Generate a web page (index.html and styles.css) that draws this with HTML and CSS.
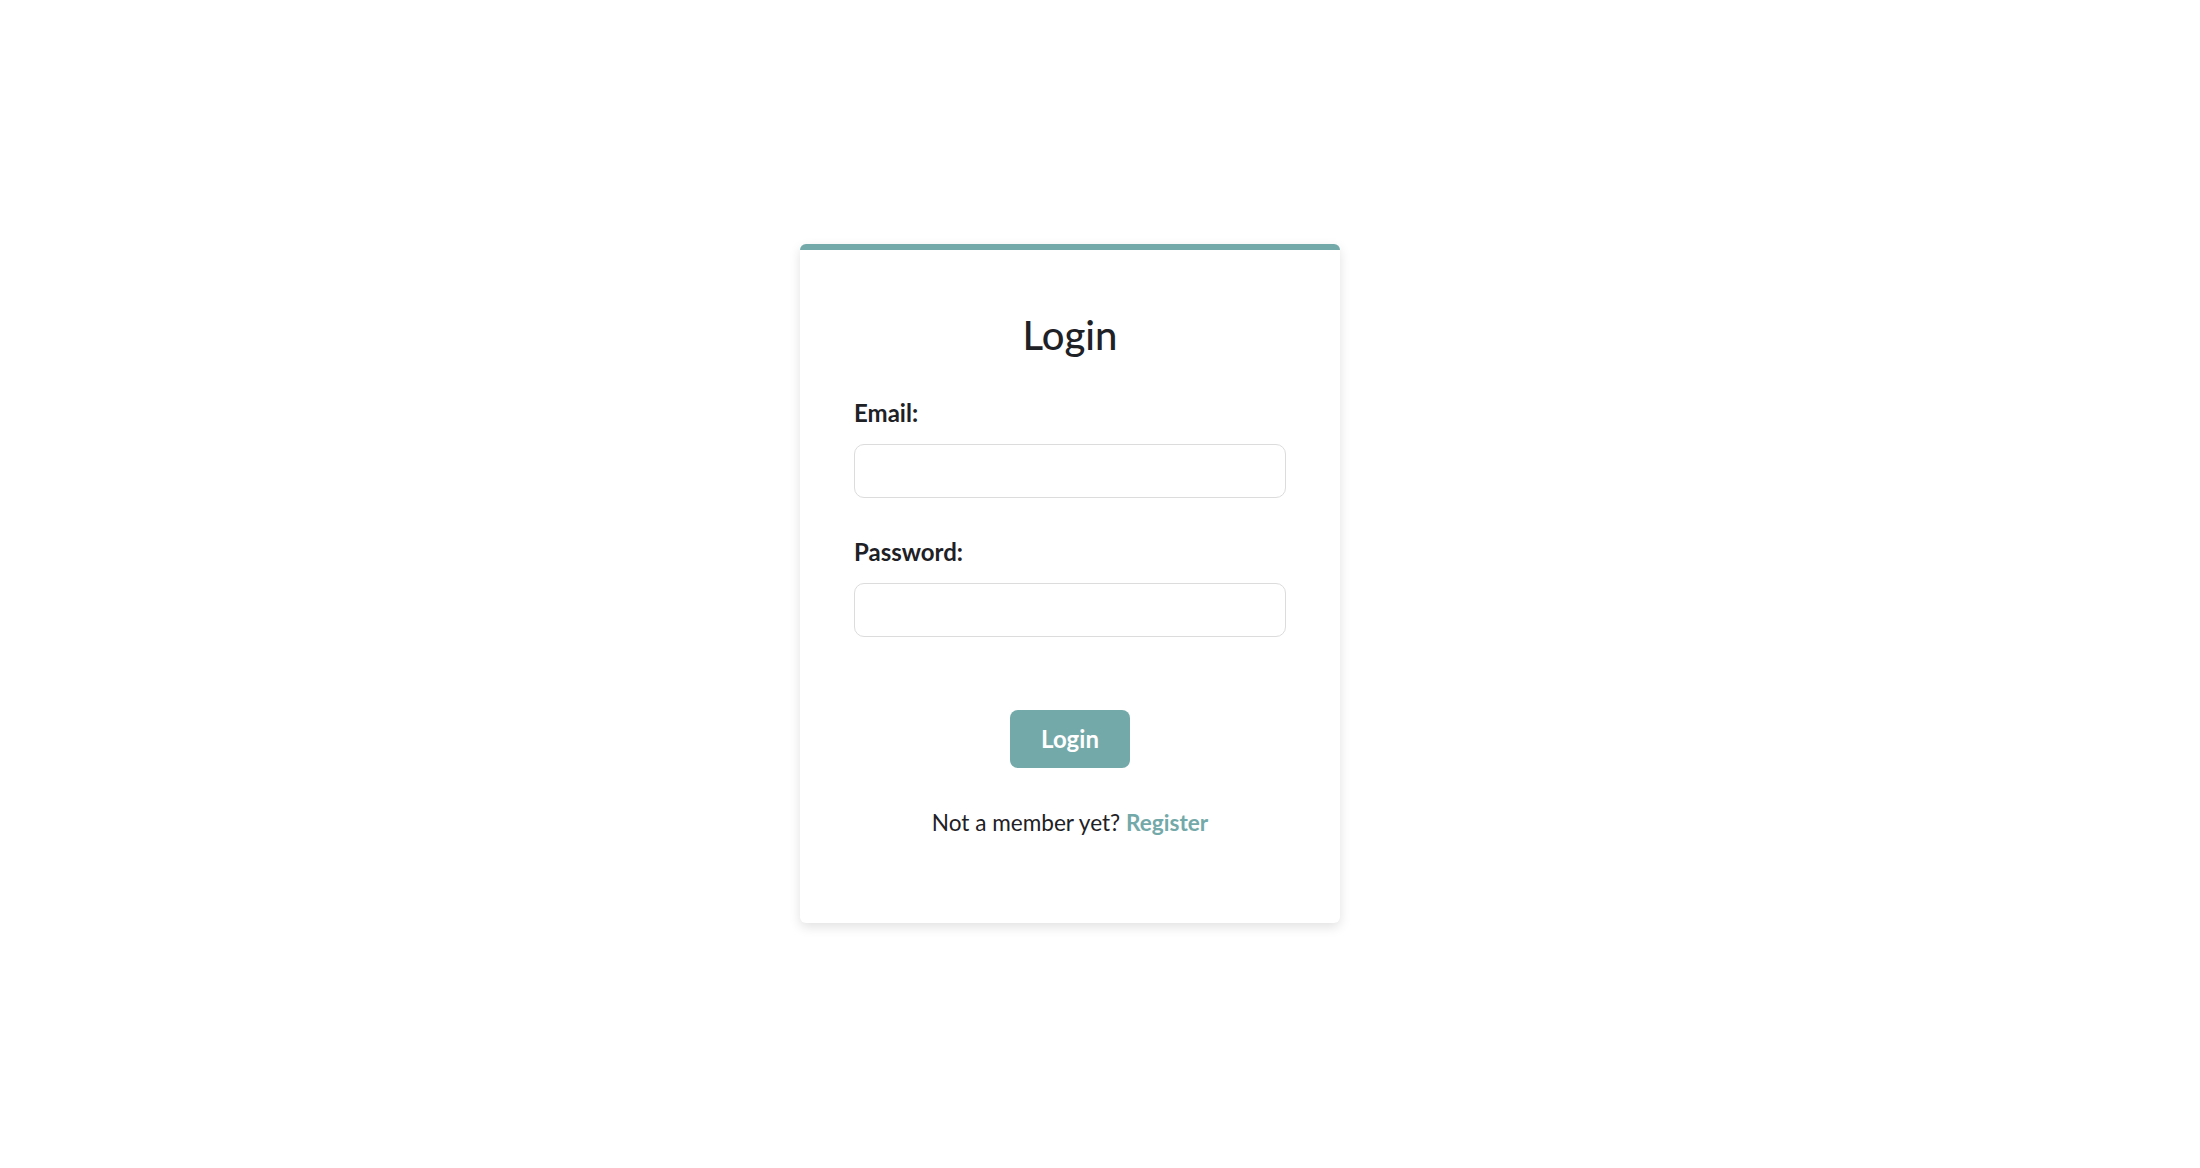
FILE: index.html
```html
<!DOCTYPE html>
<html lang="en">
<head>
<meta charset="utf-8">
<title>Login</title>
<link rel="stylesheet" href="styles.css">
</head>
<body>
<main class="page">
  <section class="card">
    <h1 class="title">Login</h1>
    <form class="form">
      <div class="field">
        <label class="label" for="email">Email:</label>
        <input class="input" id="email" type="email">
      </div>
      <div class="field">
        <label class="label" for="password">Password:</label>
        <input class="input" id="password" type="password">
      </div>
      <div class="actions">
        <button class="btn" type="button">Login</button>
      </div>
    </form>
    <p class="footer">Not a member yet? <a class="link" href="#">Register</a></p>
  </section>
</main>
</body>
</html>
```
FILE: styles.css
```css
html, body {
  margin: 0;
  padding: 0;
  background: #ffffff;
}

body {
  font-family: Lato, "Noto Sans", sans-serif;
  color: #1e2125;
  line-height: 1.2;
}

.page {
  display: flex;
  justify-content: center;
  padding-top: 244px;
  padding-right: 60px;
  padding-bottom: 40px;
}

.card {
  width: 540px;
  box-sizing: border-box;
  background: #fff;
  border-top: 6px solid #74a9aa;
  border-radius: 6px;
  padding: 61px 54px 87px;
  box-shadow: 0 4px 12px rgba(0, 0, 0, 0.12);
}

.title {
  margin: 0 0 40px;
  font-size: 40px;
  font-weight: 500;
  text-align: center;
  line-height: 1.2;
}

.form {
  display: flex;
  flex-direction: column;
  gap: 40px;
}

.field {
  display: flex;
  flex-direction: column;
  gap: 16px;
}

.label {
  font-size: 24px;
  font-weight: 700;
  line-height: 1.2;
}

.input {
  height: 54px;
  box-sizing: border-box;
  width: 100%;
  border: 1px solid #dcdcdc;
  border-radius: 10px;
  background: #fff;
  font: inherit;
  padding: 0 14px;
}

.actions {
  display: flex;
  justify-content: center;
  margin-top: 33px;
}

.btn {
  height: 58px;
  padding: 0 31px;
  border: none;
  border-radius: 8px;
  background: #74a9aa;
  color: #fff;
  font-family: inherit;
  font-size: 24px;
  font-weight: 700;
}

.footer {
  margin: 41px 0 0;
  text-align: center;
  font-size: 22.6px;
  line-height: 1.2;
}

.link {
  color: #74a9aa;
  font-weight: 700;
  text-decoration: none;
}
```
